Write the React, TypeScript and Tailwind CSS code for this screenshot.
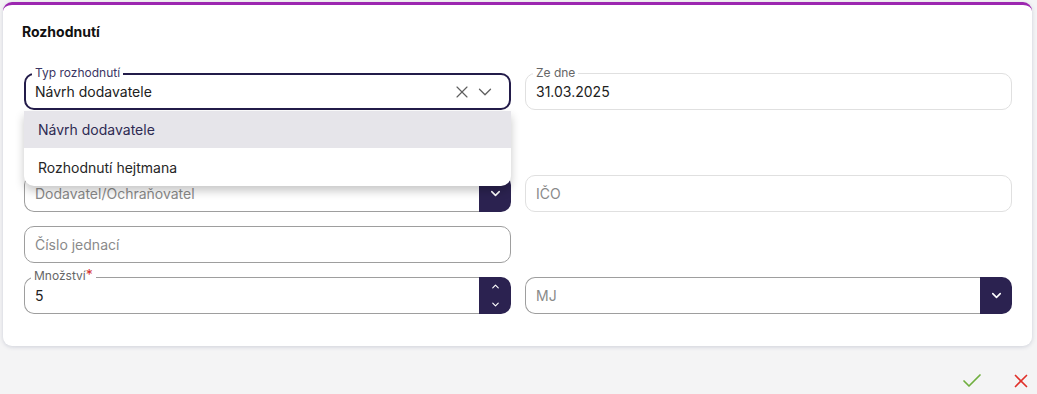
import React from 'react';
import { Check, X, ChevronDown, ChevronUp } from 'lucide-react';

const NAVY = 'bg-[#2b2250]';

type FieldProps = {
  label?: string;
  required?: boolean;
  value?: string;
  placeholder?: string;
  light?: boolean;
};

const TextField: React.FC<FieldProps> = ({ label, required, value, placeholder, light }) => (
  <div
    className={`relative h-[37px] rounded-[10px] border flex items-center px-[10px] ${
      light ? 'border-[#e0e0e0]' : 'border-[#9e9e9e]'
    }`}
  >
    {label && (
      <span className="absolute -top-[8px] left-[7px] px-[3px] bg-white text-[12px] leading-[13px] text-[#666]">
        {label}
        {required && <span className="text-[#d32f2f]">*</span>}
      </span>
    )}
    {value ? (
      <span className="text-[14px] text-[#212121]">{value}</span>
    ) : (
      <span className="text-[14px] text-[#8a8a8a]">{placeholder}</span>
    )}
  </div>
);

const ButtonField: React.FC<FieldProps & { spinner?: boolean }> = ({
  label,
  required,
  value,
  placeholder,
  spinner,
}) => (
  <div className="relative h-[37px] flex">
    <div className="flex-1 rounded-l-[10px] border border-r-0 border-[#9e9e9e] flex items-center px-[10px]">
      {value ? (
        <span className="text-[14px] text-[#212121]">{value}</span>
      ) : (
        <span className="text-[14px] text-[#8a8a8a]">{placeholder}</span>
      )}
    </div>
    <div className={`w-[32px] rounded-r-[10px] ${NAVY} flex flex-col items-center justify-center text-white`}>
      {spinner ? (
        <>
          <ChevronUp size={11} strokeWidth={2.5} />
          <div className="h-[7px]" />
          <ChevronDown size={11} strokeWidth={2.5} />
        </>
      ) : (
        <ChevronDown size={15} strokeWidth={2.5} />
      )}
    </div>
    {label && (
      <span className="absolute -top-[8px] left-[7px] px-[3px] bg-white text-[12px] leading-[13px] text-[#666]">
        {label}
        {required && <span className="text-[#d32f2f] text-[14px] leading-[10px]">*</span>}
      </span>
    )}
  </div>
);

const TypSelect: React.FC = () => (
  <div className="relative">
    <div className="relative h-[37px] rounded-[10px] border-2 border-[#231c4a] flex items-center pl-[9px] pr-[13px]">
      <span className="absolute -top-[9px] left-[6px] px-[3px] bg-white text-[12px] leading-[13px] text-[#3b3563]">
        Typ rozhodnutí
      </span>
      <span className="flex-1 text-[14px] text-[#212121]">Návrh dodavatele</span>
      <X size={20} strokeWidth={1.4} className="text-[#5f5f5f] mr-[2px]" />
      <ChevronDown size={22} strokeWidth={1.4} className="text-[#5f5f5f]" />
    </div>
    <div className="absolute left-0 right-0 top-[38px] z-10 bg-white rounded-b-[10px] shadow-[0_5px_10px_rgba(0,0,0,0.22)] overflow-hidden">
      <div className="h-[37px] flex items-center px-[14px] bg-[#e6e5ea] text-[14px] text-[#2e2a52]">
        Návrh dodavatele
      </div>
      <div className="h-[38px] flex items-center px-[14px] text-[14px] text-[#262626]">
        Rozhodnutí hejtmana
      </div>
    </div>
  </div>
);

export default function App() {
  return (
    <div
      className="w-[1037px] h-[394px] bg-[#f4f4f5] pt-[2px] overflow-hidden"
      style={{ fontFamily: 'Inter, "Noto Sans", sans-serif' }}
    >
      <div className="ml-[3px] w-[1029px] bg-white rounded-[9px] border-t-[3px] border-[#9c27b0] shadow-[0_1px_4px_rgba(60,70,110,0.2)] pl-[21px] pr-[20px] pt-[18px] pb-[32px]">
        <h2 className="text-[14px] font-bold text-[#111] leading-[17px] mb-[33px] -ml-[2px]">Rozhodnutí</h2>
        <div className="grid grid-cols-2 gap-x-[14px] gap-y-[14px]">
          <TypSelect />
          <TextField label="Ze dne" value="31.03.2025" light />

          <div className="h-[37px]" />
          <div className="h-[37px]" />

          <ButtonField placeholder="Dodavatel/Ochraňovatel" />
          <TextField placeholder="IČO" light />

          <TextField placeholder="Číslo jednací" />
          <div className="h-[37px]" />

          <ButtonField label="Množství" required value="5" spinner />
          <ButtonField placeholder="MJ" />
        </div>
      </div>
      <div className="flex justify-end items-center gap-[26px] pr-[5px] pt-[23px]">
        <Check size={24} strokeWidth={1.7} className="text-[#6fae3f]" />
        <X size={22} strokeWidth={1.8} className="text-[#e0302a]" />
      </div>
    </div>
  );
}
